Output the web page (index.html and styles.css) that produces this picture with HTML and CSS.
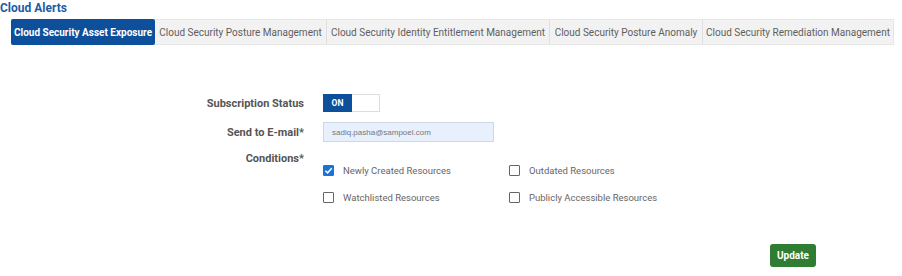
FILE: index.html
```html
<!DOCTYPE html>
<html lang="en">
<head>
    <meta charset="UTF-8">
    <title>Cloud Alerts</title>
    <link rel="stylesheet" href="styles.css">
</head>
<body>
    <div class="page">
        <h1 class="title">Cloud Alerts</h1>

        <div class="tabs">
            <div class="tab active">Cloud Security Asset Exposure</div>
            <div class="tab">Cloud Security Posture Management</div>
            <div class="tab">Cloud Security Identity Entitlement Management</div>
            <div class="tab">Cloud Security Posture Anomaly</div>
            <div class="tab">Cloud Security Remediation Management</div>
        </div>

        <div class="form">
            <div class="label row-sub">Subscription Status</div>
            <div class="row-sub">
                <div class="toggle">
                    <span class="toggle-on">ON</span>
                    <span class="toggle-off"></span>
                </div>
            </div>

            <div class="label row-mail">Send to E-mail*</div>
            <div class="row-mail">
                <input class="email" type="text" value="sadiq.pasha@sampoel.com">
            </div>

            <div class="label row-cond">Conditions*</div>
            <div class="conditions">
                <label class="check"><span class="box checked"><svg width="9" height="9" viewBox="0 0 10 10"><path d="M1.5 5.2 L4 7.6 L8.6 2.4" fill="none" stroke="#fff" stroke-width="1.7"/></svg></span>Newly Created Resources</label>
                <label class="check"><span class="box"></span>Outdated Resources</label>
                <label class="check"><span class="box"></span>Watchlisted Resources</label>
                <label class="check"><span class="box"></span>Publicly Accessible Resources</label>
            </div>
        </div>

        <div class="actions">
            <button class="update-btn">Update</button>
        </div>
    </div>
</body>
</html>
```

FILE: styles.css
```css
body {
    margin: 0;
    font-family: Roboto, 'Liberation Sans', Arial, sans-serif;
    background-color: #fff;
    color: #555;
}
.page {
    width: 902px;
    height: 276px;
    overflow: hidden;
}
.title {
    margin: 0;
    padding-top: 1px;
    font-size: 12px;
    font-weight: bold;
    color: #1b5ca6;
    line-height: 15px;
}
.tabs {
    display: flex;
    margin: 3px 0 0 11px;
    width: 883px;
    height: 26px;
    background-color: #f2f2f2;
    border: 1px solid #e6e6e6;
    box-sizing: border-box;
}
.tab {
    display: flex;
    align-items: center;
    justify-content: center;
    height: 100%;
    font-size: 10px;
    color: #5f5f5f;
    border-right: 1px solid #e0e0e0;
    box-sizing: border-box;
    white-space: nowrap;
}
.tab:nth-child(1) { width: 144px; }
.tab:nth-child(2) { width: 172px; }
.tab:nth-child(3) { width: 223px; }
.tab:nth-child(4) { width: 153px; }
.tab:nth-child(5) { flex: 1; border-right: none; }
.tab.active {
    background-color: #0d4f9b;
    color: #fff;
    font-weight: bold;
    border-radius: 2px;
    margin: -1px 0 -1px -1px;
    height: 26px;
    border-right: none;
}
.form {
    display: grid;
    grid-template-columns: 304px 1fr;
    column-gap: 19px;
    margin-top: 48px;
}
.label {
    text-align: right;
    font-size: 11px;
    font-weight: bold;
    color: #555;
}
.row-sub {
    height: 20px;
    display: flex;
    align-items: center;
    justify-content: flex-end;
}
.row-sub + .row-sub { justify-content: flex-start; }
.row-mail {
    margin-top: 8px;
    height: 22px;
    display: flex;
    align-items: center;
    justify-content: flex-end;
}
.row-mail + .row-mail { justify-content: flex-start; }
.row-cond {
    margin-top: 9px;
    line-height: 13px;
}
.toggle {
    display: flex;
    width: 57px;
    height: 18px;
    border: 1px solid #ddd;
    box-sizing: border-box;
}
.toggle-on {
    width: 29px;
    background-color: #0d4f9b;
    color: #fff;
    font-size: 8.5px;
    font-weight: bold;
    display: flex;
    align-items: center;
    justify-content: center;
    margin: -1px 0 -1px -1px;
}
.toggle-off {
    flex: 1;
    background-color: #fff;
}
.email {
    width: 171px;
    height: 20px;
    box-sizing: border-box;
    border: 1px solid #cfd8e6;
    background-color: #e8f0fe;
    font-family: 'Liberation Sans', Arial, sans-serif;
    font-size: 8px;
    color: #777;
    padding: 0 8px;
    outline: none;
}
.conditions {
    display: grid;
    grid-template-columns: 186px 186px;
    row-gap: 16px;
    margin-top: 22px;
}
.check {
    display: flex;
    align-items: center;
    font-size: 9.5px;
    color: #666;
    height: 11px;
}
.box {
    width: 9px;
    height: 9px;
    border: 1px solid #666;
    border-radius: 1px;
    margin-right: 9px;
    display: flex;
    align-items: center;
    justify-content: center;
    background-color: #fff;
}
.box.checked {
    background-color: #1a73d9;
    border-color: #1a73d9;
}
.actions {
    display: flex;
    justify-content: flex-end;
    width: 816px;
    margin-top: 41px;
}
.update-btn {
    width: 46px;
    height: 23px;
    background-color: #2e7d32;
    color: #fff;
    border: none;
    border-radius: 3px;
    font-family: Roboto, 'Liberation Sans', Arial, sans-serif;
    font-size: 10px;
    font-weight: bold;
    padding: 0;
}
```
